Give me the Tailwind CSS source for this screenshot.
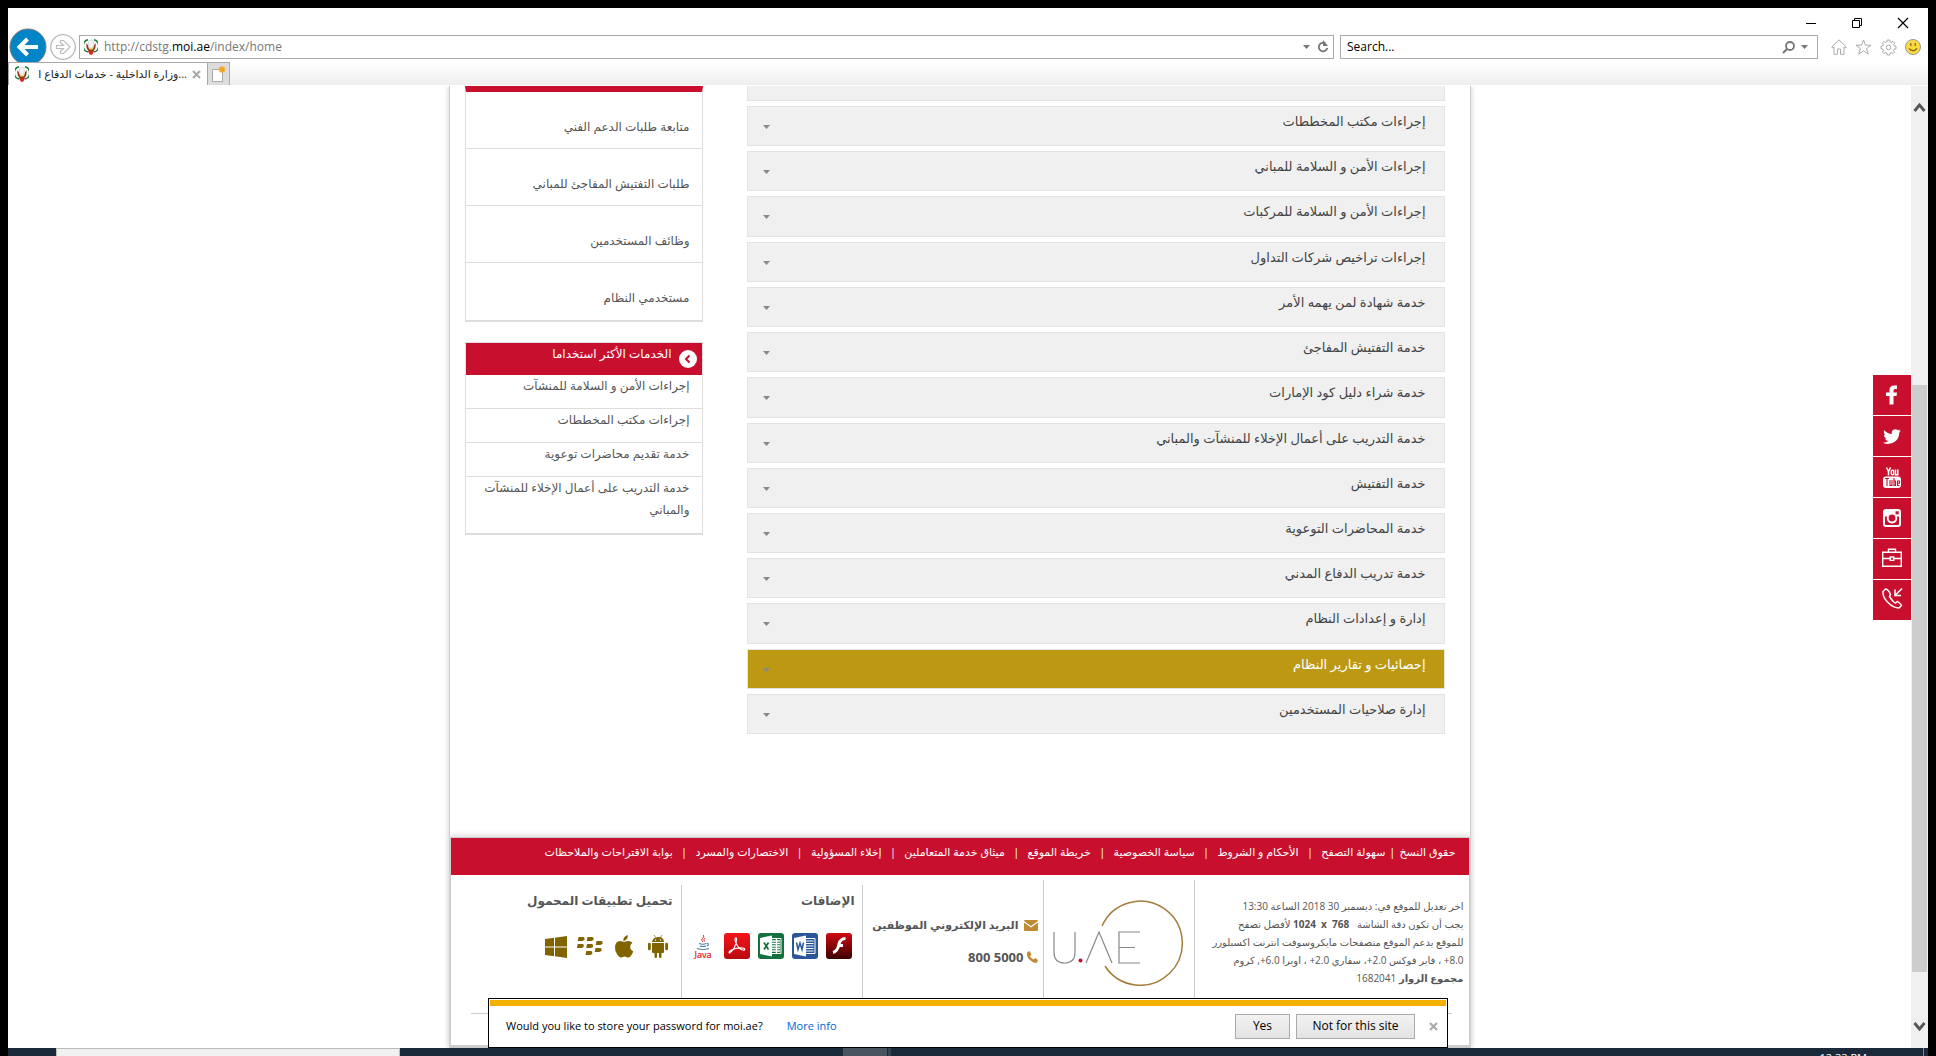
<!DOCTYPE html>
<html lang="ar">
<head>
<meta charset="utf-8">
<title>وزارة الداخلية - خدمات الدفاع المدني</title>
<script src="https://cdn.jsdelivr.net/npm/@tailwindcss/browser@4"></script>
</head>
<body class="bg-black">
<svg class="hidden">
  <symbol id="emblem" viewBox="0 0 14 16">
    <path d="M4 .8A6.300 6.300 0 0 0 4 13M10 .8A6.300 6.300 0 0 1 10 13" fill="none" stroke="#17803a" stroke-width="1.500"/>
    <path d="M2.500 4Q1.500 9 5 12.500h4Q12.500 9 11.500 4L10 6.500 9 10H5L4 6.500z" fill="#8a3a14"/>
    <path d="M4.500 4Q4.500.8 7 .8T9.500 4L9 7.500 7 9.500 5 7.500z" fill="#f4f4f4" stroke="#bbb" stroke-width=".5"/>
    <path d="M5.500 8.500L7 10l1.500-1.500V11h-3z" fill="#e0a020"/>
    <path d="M4 12h6l-1.500 3.200Q7 16.500 5.500 15.200z" fill="#d22"/>
  </symbol>
  <symbol id="caret" viewBox="0 0 7 4"><path d="M0 0h7L3.500 4z" fill="currentColor"/></symbol>
</svg>
<div class="relative flex h-screen flex-col overflow-hidden bg-black px-2 pt-2 font-['Open_Sans','DejaVu_Sans',sans-serif] text-[12px]" dir="ltr">

  <!-- Browser chrome -->
  <header class="bg-white">
    <div class="flex h-[27px] items-center justify-end gap-[34px] pr-[19px] text-black">
      <button aria-label="Minimize" class="pt-[2px]"><svg width="12" height="12" viewBox="0 0 12 12"><path d="M1 6.500h10" stroke="currentColor"/></svg></button>
      <button aria-label="Restore" class="pt-[2px]"><svg width="12" height="12" viewBox="0 0 12 12" fill="none" stroke="currentColor"><path d="M1.500 3.500h7v7h-7zM3.500 3.500v-2h7v7h-2"/></svg></button>
      <button aria-label="Close" class="pt-[2px]"><svg width="12" height="12" viewBox="0 0 12 12"><path d="M1 1l10 10M11 1L1 11" stroke="currentColor" stroke-width="1.200"/></svg></button>
    </div>
    <div class="flex h-[27px] items-start">
      <button aria-label="Back" class="z-10 -mt-[7px] ml-px h-[34px] w-[38px] shrink-0 overflow-hidden"><svg width="38" height="38" viewBox="0 0 38 38"><circle cx="19" cy="19" r="18" fill="#0285c7" stroke="#777" stroke-width="1"/><path d="M29 19H11M18.500 11l-8 8 8 8" fill="none" stroke="#fff" stroke-width="4"/></svg></button>
      <button aria-label="Forward" class="-mt-px ml-[3px] shrink-0"><svg width="26" height="26" viewBox="0 0 26 26" fill="none" stroke="#bbb"><circle cx="13" cy="13" r="12.300" stroke-width="1.300"/><path d="M6.500 11.500h7L10.500 8.500V6.500h3l6.500 6.500-6.500 6.500h-3v-2l3-3h-7z" stroke-width="1.200"/></svg></button>
      <div class="ml-[3px] flex h-6 flex-1 items-center border border-[#aaa] pl-[4px] pr-[4px]">
        <svg width="14" height="16"><use href="#emblem"/></svg>
        <p class="ml-[6px] flex-1 text-[12px] leading-5 text-[#777]">http://cdstg.<span class="text-black">moi.ae</span>/index/home</p>
        <svg class="mr-[7px] text-[#777]" width="7" height="4"><use href="#caret"/></svg>
        <button aria-label="Refresh"><svg width="12" height="14" viewBox="0 0 12 14"><path d="M8.500 3.500A4.300 4.300 0 1 0 10.300 8" fill="none" stroke="#777" stroke-width="1.800"/><path d="M6 0v6h5z" fill="#777"/></svg></button>
      </div>
      <label class="ml-[6px] flex h-6 w-[478px] items-center border border-[#aaa] pl-[6px] pr-[9px]">
        <input aria-label="Search" class="min-w-0 flex-1 text-[12px] leading-5 text-black outline-none placeholder:text-black" placeholder="Search...">
        <svg width="13" height="13" viewBox="0 0 13 13"><circle cx="8" cy="5" r="4" fill="none" stroke="#777" stroke-width="1.800"/><path d="M5 8L1 12" stroke="#777" stroke-width="2"/></svg>
        <svg class="ml-[6px] text-[#777]" width="7" height="4"><use href="#caret"/></svg>
      </label>
      <div class="ml-[13px] mr-[7px] flex h-6 items-center gap-2">
        <svg width="16" height="16" viewBox="0 0 16 16" fill="none" stroke="#aaa"><path d="M.7 8L8 .8 15.300 8l-1 1L13 8v7.300H9.500V10h-3v5.300H3V8L1.700 9z"/></svg>
        <svg width="17" height="16" viewBox="0 0 17 16" fill="none" stroke="#aaa"><path d="M8.500 1l2 5.200h5.500l-4.400 3.400 1.700 5.600-4.800-3.400-4.800 3.400 1.700-5.600L1 6.200h5.500z"/></svg>
        <svg width="17" height="17" viewBox="0 0 17 17" fill="none" stroke="#aaa"><path d="M7.200 1h2.600l.4 2 1.100.5L13 2.300 14.700 4l-1.200 1.700.5 1.100 2 .4v2.600l-2 .4-.5 1.100 1.200 1.700-1.700 1.700-1.700-1.200-1.100.5-.4 2H7.200l-.4-2-1.100-.5L4 14.700 2.300 13l1.200-1.700L3 10.200l-2-.4V7.200l2-.4.5-1.100L2.300 4 4 2.300l1.700 1.200L6.800 3z"/><circle cx="8.500" cy="8.500" r="2.300"/></svg>
        <svg width="16" height="16" viewBox="0 0 16 16"><circle cx="8" cy="8" r="7.500" fill="#fbd940" stroke="#999"/><path d="M5.800 4v3M10.200 4v3M4 9.500q4 4.500 8 0" fill="none" stroke="#876b1a" stroke-width="1.300"/></svg>
      </div>
    </div>
    <div class="flex h-[24px] border-b border-white bg-linear-to-b from-white to-[#eee]">
      <div class="flex w-[199px] items-center border-l border-t border-[#aaa] bg-white pl-[6px] pr-[6px]">
        <svg width="14" height="16"><use href="#emblem"/></svg>
        <p class="ml-[3px] flex-1 whitespace-nowrap text-right text-[11px] leading-5 text-[#222]"><bdi>وزارة الداخلية - خدمات الدفاع ا</bdi>...</p>
        <button aria-label="Close tab" class="ml-[5px]"><svg width="9" height="9" viewBox="0 0 9 9"><path d="M1 1l7 7M8 1L1 8" stroke="#aaa" stroke-width="2.200"/></svg></button>
      </div>
      <button aria-label="New tab" class="flex w-[23px] items-center justify-center border border-b-0 border-[#aaa] bg-[#ddd]"><svg width="15" height="16" viewBox="0 0 15 16"><path d="M1.500 3.500h10v12h-10z" fill="#fff" stroke="#aaa"/><path d="M11 0v7M7.500 3.500h7M8.500 1l5 5M13.500 1l-5 5" stroke="#f2a413" stroke-width="1.300"/></svg></button>
    </div>
  </header>

  <div class="flex min-h-0 flex-1 bg-white">
    <div class="min-w-0 flex-1 overflow-hidden" dir="rtl">
      <div class="mx-auto w-full max-w-[1022px] border-x border-[#ccc] shadow-[0_0_6px_#ccc]">
        <main class="flex gap-[44px] pb-[103px] pl-[15px] pr-[25px]">
          <div class="min-w-0 flex-1">
            <div class="mb-[5px] h-[15px] border border-t-0 border-[#e4e4e4] bg-[#f0f0f0]"></div>
            <div id="services" class="grid h-[628px] auto-rows-fr gap-[5px]"></div>
          </div>
          <aside class="w-[238px] shrink-0 text-[#555]">
            <ul class="border-x border-b-2 border-[#ddd] border-t-[6px] border-t-[#c8102e] text-[12px] leading-5 *:h-[57px] *:border-b *:border-[#ddd] *:pr-3 *:pt-[25px] *:last:border-b-0">
              <li><a href="#">متابعة طلبات الدعم الفني</a></li>
              <li><a href="#">طلبات التفتيش المفاجئ للمباني</a></li>
              <li><a href="#">وظائف المستخدمين</a></li>
              <li><a href="#">مستخدمي النظام</a></li>
            </ul>
            <section class="mt-5 border border-b-2 border-[#ddd] text-[12px]">
              <h2 class="flex h-8 gap-[7px] bg-[#c8102e] pr-[5px] text-white"><svg class="mt-[7px]" width="18" height="18" viewBox="0 0 18 18"><circle cx="9" cy="9" r="9" fill="#fff"/><path d="M10.500 5.500L7 9l3.500 3.500" fill="none" stroke="#c8102e" stroke-width="2"/></svg><span class="leading-[22px]">الخدمات الأكثر استخداما</span></h2>
              <ul class="leading-[22px] *:min-h-[34px] *:border-b *:border-[#ddd] *:pr-3 *:last:border-b-0 *:last:pb-3">
                <li><a href="#">إجراءات الأمن و السلامة للمنشآت</a></li>
                <li><a href="#">إجراءات مكتب المخططات</a></li>
                <li><a href="#">خدمة تقديم محاضرات توعوية</a></li>
                <li><a href="#">خدمة التدريب على أعمال الإخلاء للمنشآت<br>والمباني</a></li>
              </ul>
            </section>
          </aside>
        </main>
        <footer class="border-b-[3px] border-l border-r border-t border-[#ccc] shadow-[0_-2px_5px_#ddd]">
          <nav class="flex h-[37px] justify-between whitespace-nowrap bg-[#c8102e] pb-2 pl-[94px] pr-[13px] text-[11px] leading-[28px] text-white">
            <span class="flex gap-1"><a href="#">حقوق النسخ</a><span>|</span><a href="#">سهولة التصفح</a></span><span>|</span><a href="#">الأحكام و الشروط</a><span>|</span><a href="#">سياسة الخصوصية</a><span>|</span><a href="#">خريطة الموقع</a><span>|</span><a href="#">ميثاق خدمة المتعاملين</a><span>|</span><a href="#">إخلاء المسؤولية</a><span>|</span><a href="#">الاختصارات والمسرد</a><span>|</span><a href="#">بوابة الاقتراحات والملاحظات</a>
          </nav>
          <div class="flex h-[138px] pt-[5px] text-[#555]">
            <div class="w-[274px] whitespace-nowrap pr-[5px] pt-[17px] text-[10px] leading-[18px]">
              <p>اخر تعديل للموقع في: ديسمبر 30 2018 الساعة <bdi>13:30</bdi></p>
              <p>يجب أن تكون دقة الشاشة &nbsp; <b dir="ltr" class="[unicode-bidi:isolate]">1024 &nbsp;x&nbsp; 768</b> لأفضل تصفح</p>
              <p>للموقع يدعم الموقع متصفحات مايكروسوفت انترنت اكسبلورر</p>
              <p>8.0&rlm;+ ، فاير فوكس 2.0&rlm;+، سفاري 2.0&rlm;+ ، اوبرا 6.0&rlm;+, كروم</p>
              <p><b>مجموع الزوار</b> 1682041</p>
            </div>
            <div class="w-[152px] border-x border-[#ccc] pt-5" dir="ltr">
              <svg class="ml-[9px]" width="132" height="86" viewBox="0 0 132 86" fill="none">
                <path d="M49 26A42 42 0 1 1 52 66" stroke="#a57c3a" stroke-width="1.500"/>
                <path d="M1 32v20q0 11 10.500 11T22 52V32M33 63l13-31 13 31M87 32H66v31h21M66 47.500h16" stroke="#888" stroke-width="1.200"/>
                <circle cx="27.500" cy="60.500" r="2" fill="#c8102e"/>
              </svg>
            </div>
            <div class="flex w-[180px] flex-col gap-3 whitespace-nowrap pr-[5px] pt-[35px] font-bold leading-5 *:flex *:items-center">
              <p class="gap-[5px] text-[11px]"><svg class="shrink-0" width="14" height="11" viewBox="0 0 14 11" fill="#c08a32"><path d="M0 1q0-1 1-1h12q1 0 1 1L7 6zM0 2.500L7 7.500l7-5V10q0 1-1 1H1q-1 0-1-1z"/></svg><a href="#">البريد الإلكتروني الموظفين</a></p>
              <p class="gap-[3px] text-[13px]"><svg class="shrink-0" width="11" height="12" viewBox="0 0 11 12" fill="#c08a32"><path d="M0 1.500L2.500 0 4.500 3.500 3 5Q4 7.500 6.500 8.500L8 7l3 2-1 2.500Q7 13 3 9-1 5 0 1.500z"/></svg><span dir="ltr">800 5000</span></p>
            </div>
            <div class="mt-[5px] w-[182px] border-x border-[#ccc] pr-[7px] pt-[6px]">
              <h3 class="text-[12px] font-bold leading-5">الإضافات</h3>
              <div class="mr-[3px] mt-[22px] flex gap-2">
                <a href="#" aria-label="Flash"><svg width="26" height="26" viewBox="0 0 26 26"><defs><linearGradient id="fl" x2="0" y2="1"><stop stop-color="#d00a10"/><stop offset="1" stop-color="#3a0002"/></linearGradient><linearGradient id="pd" x2="0" y2="1"><stop stop-color="#f5141a"/><stop offset="1" stop-color="#b80a10"/></linearGradient></defs><rect width="26" height="26" rx="3" fill="url(#fl)"/><path d="M19.500 5.500q-5 0-6.500 5.500-1.500 7.500-6 8.500M12 12.500h5" fill="none" stroke="#fff" stroke-width="3"/></svg></a>
                <a href="#" aria-label="Word"><svg width="26" height="26" viewBox="0 0 26 26"><rect width="26" height="26" rx="3" fill="#2b579a"/><path d="M14 5.500h9v15h-9" fill="none" stroke="#fff"/><path d="M14 8h7.500M14 10.500h7.500M14 13h7.500M14 15.500h7.500M14 18h7.500" stroke="#fff"/><path d="M2 5l12-2.500v21L2 21z" fill="#fff"/><path d="M4.500 9.500l1.500 7L8 10l2 6.500 1.500-7" fill="none" stroke="#2b579a" stroke-width="1.500"/></svg></a>
                <a href="#" aria-label="Excel"><svg width="26" height="26" viewBox="0 0 26 26"><rect width="26" height="26" rx="3" fill="#15703f"/><path d="M14 5.500h9v15h-9" fill="none" stroke="#fff"/><path d="M14 8h8M14 10.500h8M14 13h8M14 15.500h8M14 18h8M18.500 6v14" stroke="#fff" stroke-width="1.300"/><path d="M2 5l12-2.500v21L2 21z" fill="#fff"/><path d="M6 9.500l4.500 7M10.500 9.500L6 16.500" stroke="#15703f" stroke-width="1.700"/></svg></a>
                <a href="#" aria-label="PDF"><svg width="26" height="26" viewBox="0 0 26 26"><rect width="26" height="26" rx="3" fill="url(#pd)"/><path d="M5.500 20q6-4 7-13 .3-2.500-1-2-1.500 1.500 1.500 7t7.500 5q1-1.500-2-2-6-.5-11 2-3.500 2-2 3z" fill="none" stroke="#fff" stroke-width="1.200"/></svg></a>
                <a href="#" aria-label="Java" class="flex w-[26px] justify-center pt-[2px]"><svg width="22" height="26" viewBox="0 0 22 26"><g fill="none" stroke="#4b7fa8" stroke-width="1.100"><path d="M7 8.500q3.500 1.500 7.500 0M8 11q3 1 6 0M5 13.500q6 2 12 0M15 8.500q3 0 0 2.500"/></g><path d="M11.500 0q1 2-1 3.500t.5 3.500M13 3q-2 1.500-.5 3.500" fill="none" stroke="#e03030"/><text x="11" y="23" text-anchor="middle" font-size="9" fill="#d22" stroke="#d22" stroke-width=".2" font-family="Noto Sans">Java</text></svg></a>
              </div>
            </div>
            <div class="min-w-0 flex-1 pr-2 pt-[11px]">
              <h3 class="text-[12px] font-bold leading-5">تحميل تطبيقات المحمول</h3>
              <div class="mr-[2px] mt-[24px] flex gap-2 text-[#7f6400] *:flex *:h-[23px] *:w-[26px] *:items-center *:justify-center">
                <a href="#" aria-label="Android"><svg width="20" height="23" viewBox="0 0 20 23" fill="currentColor"><path d="M4 7Q4.500 2.500 10 2t6 5zM4 8h12v9q0 1-1 1h-1.500v4q0 1-1.200 1t-1.300-1v-4H9v4q0 1-1.200 1T6.500 22v-4H5q-1 0-1-1zM0 9q0-1.200 1.300-1.200T2.800 9v5q0 1.300-1.400 1.300T0 14zM17.200 9q0-1.200 1.400-1.200T20 9v5q0 1.300-1.400 1.300T17.200 14z"/><path d="M6 0l1.500 2.500M14 0l-1.500 2.500" stroke="currentColor" stroke-width=".7"/><circle cx="7.500" cy="5" r=".7" fill="#fff"/><circle cx="12.500" cy="5" r=".7" fill="#fff"/></svg></a>
                <a href="#" aria-label="Apple"><svg width="20" height="23" viewBox="0 0 19 23" fill="currentColor"><path d="M13.300 0q.2 3-1.500 4.500T8.800 6Q8.600 3.500 10 2T13.300 0zM18 7.800q-2.400 1.600-2.300 4.200.1 3 3.100 4.200-.6 2-2 4-1.500 2.300-3 2.300-1 0-2-.5-1.800-.8-3.600 0-1 .5-2 .5-1.600-.2-3.300-2.800Q.2 16 .5 12q.4-5.500 5-6 1.200 0 2.500.6 1.500.6 3 0Q12.500 6 13.800 6q2.700 0 4.200 1.800z"/></svg></a>
                <a href="#" aria-label="BlackBerry"><svg width="26" height="19" viewBox="0 0 26 19" fill="currentColor"><path id="k" d="M1.500 0H6q2 0 1.500 2.200Q7 4 5 4H.7z"/><use href="#k" x="9"/><use href="#k" x="-.8" y="7"/><use href="#k" x="8.500" y="7"/><use href="#k" x="18" y="4"/><use href="#k" x="7.800" y="14"/><use href="#k" x="17" y="11"/></svg></a>
                <a href="#" aria-label="Windows"><svg width="22" height="22" viewBox="0 0 22 22" fill="currentColor"><path d="M0 3l9-1.200v8.700H0zM10 1.700L22 0v10.500H10zM0 11.500h9v8.700L0 19zM10 11.500h12V22l-12-1.700z"/></svg></a>
              </div>
            </div>
          </div>
          <div class="ml-5 mr-[17px] h-8 border-t border-[#ccc]"></div>
        </footer>
      </div>
    </div>
    <!-- Scrollbar -->
    <div class="flex w-[17px] flex-col items-center bg-[#f0f0f0] px-px">
      <svg class="mt-4" width="13" height="11" viewBox="0 0 13 11"><path d="M1.500 9L6.500 3l5 6" fill="none" stroke="#555" stroke-width="2.800"/></svg>
      <div class="mt-[272px] w-full flex-1 bg-[#cdcdcd]"></div>
      <svg class="mb-[16px] mt-[49px]" width="13" height="11" viewBox="0 0 13 11"><path d="M1.500 2l5 6 5-6" fill="none" stroke="#555" stroke-width="2.800"/></svg>
    </div>
  </div>

  <!-- Desktop taskbar -->
  <div class="flex h-2 items-start overflow-hidden bg-[#1b2a3a]">
    <div class="ml-12 h-2 w-[344px] border border-b-0 border-[#bbb] bg-[#f0f0f0]"></div>
    <div class="ml-[443px] h-2 w-11 bg-[#48545f]"></div><div class="ml-px h-2 w-[3px] bg-[#34434f]"></div>
    <time class="ml-auto mr-[56px] pt-[2px] text-[11px] leading-4 text-white">12:33 PM</time>
    <div class="mr-1 h-2 w-px bg-[#7a848e]"></div>
  </div>

  <!-- Social links, pinned beside the scrollbar -->
  <nav class="absolute right-[25px] top-[375px] flex flex-col gap-px text-white *:flex *:h-10 *:w-[38px] *:items-center *:justify-center *:bg-[#c8102e]">
    <a href="#" aria-label="Facebook"><svg width="12" height="20" viewBox="0 0 12 20" fill="currentColor"><path d="M3.500 19.500V11H0V7.500h3.500V5Q3.500.5 8 .5h3V4H9Q7.500 4 7.500 5.500v2H11l-.5 3.500h-3v8.500z"/></svg></a>
    <a href="#" aria-label="Twitter"><svg width="18" height="15" viewBox="0 0 18 15" fill="currentColor"><path d="M18 1.800l-1.800 2Q16.300 9 12.800 12 9.500 15 5 15q-2.800 0-5-1.500 3 .2 5.200-1.500Q2.700 11.800 2 9.500h1.500Q.8 8.500.8 5.800l1.600.4Q0 4 1.300 1.200 4.500 4.800 8.800 5 8.200 2.200 10 .9q2.700-1.700 5 .4L17.300.4l-1.500 2z"/></svg></a>
    <a href="#" aria-label="YouTube"><svg width="18" height="21" viewBox="0 0 18 21"><g fill="none" stroke="#fff" stroke-width="1.500"><path d="M3.500.5l2 4 2-4M5.500 4v4.500"/><rect x="8.300" y="3.300" width="2.400" height="4.500" rx="1"/><path d="M12.500 2.500v5.300h2.300V2.500"/></g><rect y="9.500" width="18" height="11.500" rx="3" fill="#fff"/><path d="M2 11.500h4M4 11.500V19M7 13v5.500h2V13M11 11v7.500h1.500V14H11M16.500 18.500h-2V14h2v2.200h-2" fill="none" stroke="#c8102e" stroke-width="1.100"/></svg></a>
    <a href="#" aria-label="Instagram"><svg width="18" height="18" viewBox="0 0 18 18"><rect width="18" height="18" rx="3" fill="#fff"/><path d="M2 7.500h2A5.300 5.300 0 1 0 14 7.500h2V15q0 1-1 1H3q-1 0-1-1z" fill="#c8102e"/><circle cx="9" cy="9" r="5" fill="#fff"/><circle cx="9" cy="9" r="3.400" fill="#c8102e"/><rect x="12.500" y="2.300" width="3.200" height="3" fill="#c8102e"/></svg></a>
    <a href="#" aria-label="Careers" class="pb-1"><svg width="20" height="19" viewBox="0 0 20 19" fill="none" stroke="#fff" stroke-width="1.400"><path d="M.7 4.200h18.600v14H.7zM6.500 4V1.200h7V4M.7 10.500H8M12 10.500h7.300M8.300 9h3.400v3.400H8.300z"/></svg></a>
    <a href="#" aria-label="Call us" class="pb-1"><svg width="21" height="21" viewBox="0 0 21 21" fill="none" stroke="#fff" stroke-width="1.500"><path d="M3.500 1L1 3.500Q.5 9 6 14.500T17 20l2.500-2.500q0-1-4-4l-2 1.500q-2-.5-6-6.500L8.500 6.500Q6.500 1.500 3.500 1z"/><path d="M20 .5L13.500 7M13 1.500v6h6"/></svg></a>
  </nav>

  <!-- Password prompt -->
  <section class="absolute bottom-2 left-1/2 flex h-[50px] w-[960px] -translate-x-1/2 flex-col border border-black bg-white p-px text-[12px] text-black">
    <div class="h-[6px] shrink-0 bg-[#f4b000]"></div>
    <div class="flex flex-1 items-center pl-4 pr-2">
      <p class="text-[11px]">Would you like to store your password for moi.ae?</p>
      <a href="#" class="ml-6 text-[11px] text-[#06c]">More info</a>
      <button class="ml-auto h-[25px] w-[55px] border border-[#aaa] bg-linear-to-b from-[#f2f2f2] to-[#e3e3e3]">Yes</button>
      <button class="ml-[6px] h-[25px] w-[119px] border border-[#aaa] bg-linear-to-b from-[#f2f2f2] to-[#e3e3e3]">Not for this site</button>
      <button aria-label="Dismiss" class="ml-[14px]"><svg width="9" height="9" viewBox="0 0 9 9"><path d="M1 1l7 7M8 1L1 8" stroke="#aaa" stroke-width="2.200"/></svg></button>
    </div>
  </section>
</div>
<script>
  const services = ['إجراءات مكتب المخططات','إجراءات الأمن و السلامة للمباني','إجراءات الأمن و السلامة للمركبات','إجراءات تراخيص شركات التداول','خدمة شهادة لمن يهمه الأمر','خدمة التفتيش المفاجئ','خدمة شراء دليل كود الإمارات','خدمة التدريب على أعمال الإخلاء للمنشآت والمباني','خدمة التفتيش','خدمة المحاضرات التوعوية','خدمة تدريب الدفاع المدني','إدارة و إعدادات النظام','إحصائيات و تقارير النظام','إدارة صلاحيات المستخدمين'];
  const active = 12;
  document.getElementById('services').innerHTML = services.map((name, i) =>
    `<button class="flex items-start justify-between border border-[#e4e4e4] pl-[15px] pr-[18px] text-[13px] leading-7 ${i === active ? 'bg-[#bc9813] text-white' : 'bg-[#f0f0f0] text-[#444]'}"><span>${name}</span><svg class="mt-[18px] text-[#888]" width="7" height="4"><use href="#caret"/></svg></button>`).join('');
</script>
</body>
</html>
